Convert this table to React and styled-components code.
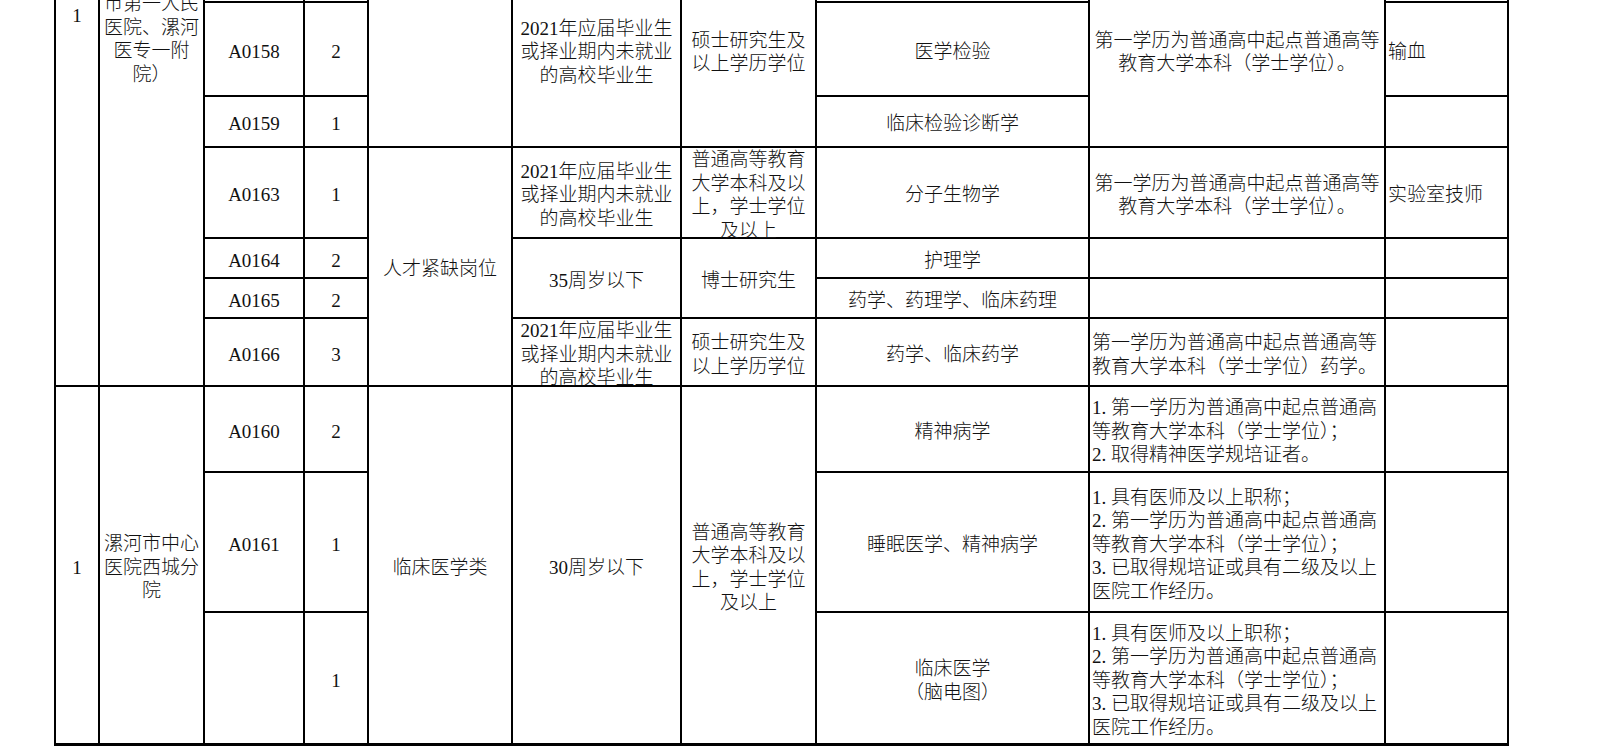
import React from "react";
import styled, { createGlobalStyle } from "styled-components";

const GlobalStyle = createGlobalStyle`
  html, body {
    margin: 0;
    padding: 0;
    background: #fff;
  }
  body {
    font-family: "Liberation Serif", "Noto Sans CJK SC", serif;
    color: #111;
  }
`;

// 截图只露出表格的中间一段，上面的行被视窗裁掉
const Viewport = styled.div`
  width: 1600px;
  height: 750px;
  overflow: hidden;
  background: #fff;
`;

const Sheet = styled.div`
  display: grid;
  grid-template-columns: 44px 105px 100px 64px 144px 169px 135px 273px 296px 123px;
  grid-template-rows: 312px 50px 94px 51px 91px 40px 40px 68px 86px 140px 132px;
  width: max-content;
  margin: -361px 0 0 54px;
  border-left: 2px solid #000;
  border-top: 2px solid #000;
  border-bottom: 1px solid #000;
  font-size: 19px;
  font-weight: 300;
  line-height: 23.5px;
`;

const Cell = styled.div`
  grid-row: span ${(p) => p.$span || 1};
  min-width: 0;
  min-height: 0;
  display: flex;
  align-items: center;
  justify-content: ${(p) => (p.$align === "left" ? "flex-start" : "center")};
  text-align: ${(p) => p.$align || "center"};
  padding: 5px ${(p) => (p.$align === "left" ? "2px" : "3px")} 0;
  white-space: nowrap;
  border-right: 2px solid #000;
  border-bottom: 2px solid #000;
`;

const Text = styled.span`
  display: block;
`;

const fresh = "2021年应届毕业生\n或择业期内未就业\n的高校毕业生";
const master = "硕士研究生及\n以上学历学位";
const bachelor = "普通高等教育\n大学本科及以\n上，学士学位\n及以上";
const firstDegree = "第一学历为普通高中起点普通高等\n教育大学本科（学士学位）。";
const req1 =
  "1. 第一学历为普通高中起点普通高\n等教育大学本科（学士学位）；\n2. 取得精神医学规培证者。";
const req2 =
  "1. 具有医师及以上职称；\n2. 第一学历为普通高中起点普通高\n等教育大学本科（学士学位）；\n3. 已取得规培证或具有二级及以上\n医院工作经历。";

const rows = [
  // 被裁掉的上方两行
  [
    { t: "1", span: 8 },
    { t: "漯河市中心\n医院（漯河\n市第一人民\n医院、漯河\n医专一附\n院）", span: 8 },
    { t: "A0156" },
    { t: "1" },
    { t: "", span: 4 },
    { t: "" },
    { t: "" },
    { t: "" },
    { t: "" },
    { t: "" },
  ],
  [
    { t: "A0157" },
    { t: "1" },
    { t: fresh, span: 3 },
    { t: master, span: 3 },
    { t: "" },
    { t: firstDegree, span: 3 },
    { t: "" },
  ],
  [{ t: "A0158" }, { t: "2" }, { t: "医学检验" }, { t: "输血", align: "left" }],
  [{ t: "A0159" }, { t: "1" }, { t: "临床检验诊断学" }, { t: "" }],
  [
    { t: "A0163" },
    { t: "1" },
    { t: "人才紧缺岗位", span: 4 },
    { t: fresh },
    { t: bachelor },
    { t: "分子生物学" },
    { t: firstDegree },
    { t: "实验室技师", align: "left" },
  ],
  [
    { t: "A0164" },
    { t: "2" },
    { t: "35周岁以下", span: 2 },
    { t: "博士研究生", span: 2 },
    { t: "护理学" },
    { t: "" },
    { t: "" },
  ],
  [{ t: "A0165" }, { t: "2" }, { t: "药学、药理学、临床药理" }, { t: "" }, { t: "" }],
  [
    { t: "A0166" },
    { t: "3" },
    { t: fresh },
    { t: master },
    { t: "药学、临床药学" },
    { t: "第一学历为普通高中起点普通高等\n教育大学本科（学士学位）药学。", align: "left" },
    { t: "" },
  ],
  [
    { t: "1", span: 3 },
    { t: "漯河市中心\n医院西城分\n院", span: 3 },
    { t: "A0160" },
    { t: "2" },
    { t: "临床医学类", span: 3 },
    { t: "30周岁以下", span: 3 },
    { t: bachelor, span: 3 },
    { t: "精神病学" },
    { t: req1, align: "left" },
    { t: "" },
  ],
  [{ t: "A0161" }, { t: "1" }, { t: "睡眠医学、精神病学" }, { t: req2, align: "left" }, { t: "" }],
  [{ t: "" }, { t: "1" }, { t: "临床医学\n（脑电图）" }, { t: req2, align: "left" }, { t: "" }],
];

function Lines({ text }) {
  const parts = text.split("\n");
  return (
    <Text>
      {parts.map((line, i) => (
        <React.Fragment key={i}>
          {i > 0 && <br />}
          {line}
        </React.Fragment>
      ))}
    </Text>
  );
}

export default function App() {
  return (
    <>
      <GlobalStyle />
      <Viewport>
        <Sheet>
          {rows.map((row, r) =>
            row.map((cell, c) => (
              <Cell key={`${r}-${c}`} $span={cell.span} $align={cell.align}>
                {cell.t && <Lines text={cell.t} />}
              </Cell>
            ))
          )}
        </Sheet>
      </Viewport>
    </>
  );
}
